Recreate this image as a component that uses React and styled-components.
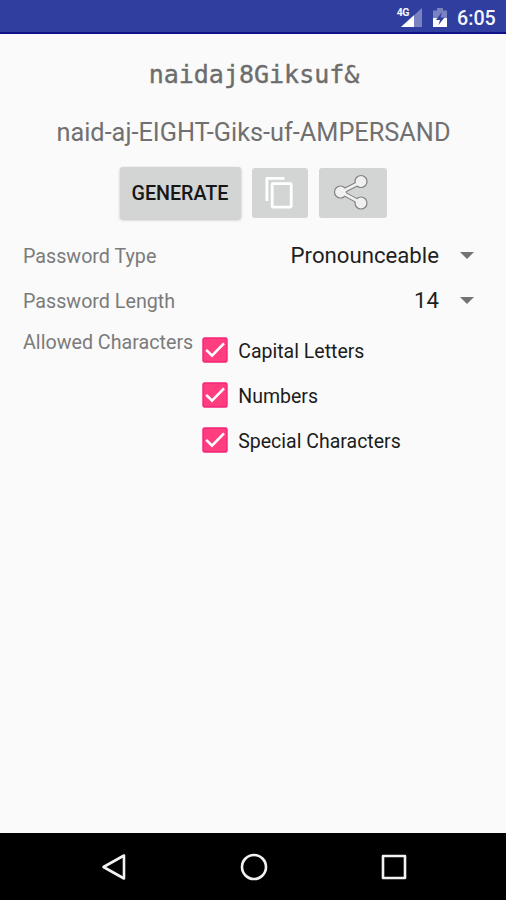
import React, { useState } from 'react';
import styled, { createGlobalStyle } from 'styled-components';

const GlobalStyle = createGlobalStyle`
    body {
        margin: 0;
        background: #fafafa;
        font-family: Roboto, "Liberation Sans", sans-serif;
    }
`;

const Screen = styled.div`
    display: flex;
    flex-direction: column;
    width: 506px;
    height: 900px;
    overflow: hidden;
    background: #fafafa;
`;

const StatusBar = styled.div`
    display: flex;
    justify-content: flex-end;
    height: 34px;
    box-sizing: border-box;
    padding-right: 11px;
    background: #303f9f;
    border-bottom: 2px solid #10108a;
    color: #f5f6fb;
`;

const StatusIcons = styled.svg`
    display: block;
    width: 60px;
    height: 32px;
`;

const Network = styled.span`
    align-self: flex-start;
    margin: 6px -12px 0 0;
    font-size: 10.5px;
    line-height: 13px;
    font-weight: 700;
    letter-spacing: -0.5px;
`;

const Clock = styled.span`
    font-size: 19.7px;
    font-weight: 500;
    line-height: 37px;
    width: 38px;
    white-space: nowrap;
`;

const Content = styled.main`
    flex: 1;
    padding: 0 23px;
`;

const Password = styled.div`
    height: 30px;
    margin-top: 26px;
    padding-left: 2px;
    text-align: center;
    font-family: "DejaVu Sans Mono", monospace;
    font-size: 25px;
    line-height: 30px;
    color: #6d6d6d;
    -webkit-text-stroke: 0.4px #6d6d6d;
`;

const Spelling = styled.div`
    margin-top: 28px;
    padding-left: 1px;
    text-align: center;
    white-space: nowrap;
    font-size: 25.3px;
    line-height: 30px;
    color: #707070;
`;

const Actions = styled.div`
    display: flex;
    align-items: center;
    justify-content: center;
    gap: 11px;
    height: 52px;
    margin-top: 19px;
`;

const ActionButton = styled.button`
    display: flex;
    align-items: center;
    justify-content: center;
    width: ${props => props.$width}px;
    height: ${props => props.$raised ? 52 : 50}px;
    padding: 0;
    border: 0;
    border-radius: 3px;
    background: #d3d4d4;
    box-shadow: ${props => props.$raised ? '0 1px 3px rgba(0, 0, 0, 0.25)' : 'none'};
    font-family: inherit;
    font-size: 19.7px;
    font-weight: 500;
    color: #161616;
`;

const Row = styled.div`
    display: flex;
    align-items: center;
    justify-content: space-between;
    height: 45px;
`;

const Settings = styled.div`
    margin-top: 13px;
`;

const Label = styled.span`
    padding-top: ${props => props.$inset || 0}px;
    font-size: 19.7px;
    line-height: 24px;
    color: #7b7b7b;
    white-space: nowrap;
`;

const Spinner = styled.div`
    display: flex;
    align-items: center;
    gap: 21px;
    padding-right: 9px;
    font-size: 22.2px;
    line-height: 28px;
    color: #1f1f1f;
`;

const Arrow = styled.span`
    margin-top: 2px;
    border: 7px solid transparent;
    border-top-color: #737373;
    border-bottom: 0;
`;

const Allowed = styled.div`
    display: flex;
    align-items: flex-start;
    padding-top: 7px;
`;

const Checks = styled.div`
    display: flex;
    flex-direction: column;
    gap: 19px;
    margin: 8px 0 0 9px;
`;

const CheckRow = styled.div`
    display: flex;
    align-items: center;
    gap: 10px;
    height: 26px;
    font-size: 19.5px;
    line-height: 26px;
    color: #1c1c1c;
`;

const CheckText = styled.span`
    padding-top: 4px;
`;

const Box = styled.svg`
    display: block;
    width: 26px;
    height: 26px;
`;

const NavBar = styled.nav`
    display: flex;
    align-items: center;
    justify-content: center;
    gap: 112px;
    height: 67px;
    padding-left: 1px;
    background: #000;
`;

const NavIcon = styled.svg`
    width: 28px;
    height: 28px;
    fill: none;
    stroke: #f2f2f2;
    stroke-width: 2.6;
    stroke-linejoin: round;
`;

const CopyIcon = () => (
    <svg width="32" height="36" viewBox="2.5 1 32 36" fill="none" stroke="#fff" strokeWidth="2.8" strokeLinejoin="round">
        <path d="M23 4.4H5.4V27" />
        <rect x="10.7" y="9.7" width="19" height="23.5" rx="1" />
    </svg>
)

const ShareIcon = () => (
    <svg width="40" height="40" viewBox="1 0.5 40 40">
        <path d="M29 9.5L9 19.5L29 30.5" fill="none" stroke="#828282" strokeWidth="4.8" />
        <g fill="#f0f0f0" stroke="#828282" strokeWidth="1.2">
            <circle cx="8.5" cy="19.5" r="6" />
            <circle cx="29" cy="9" r="6" />
            <circle cx="29" cy="30.5" r="6" />
        </g>
        <path d="M29 9.5L9 19.5L29 30.5" fill="none" stroke="#f0f0f0" strokeWidth="2.6" />
    </svg>
)

const Check = (props) => {
    const [checked, setChecked] = useState(true);

    return (
        <CheckRow onClick={() => setChecked(!checked)}>
            <Box viewBox="0 0 26 26">
                <rect x="1" y="1" width="24" height="24" rx="1.5" fill={checked ? '#ff3d7f' : '#fafafa'} stroke="#f5247a" strokeWidth="1.4" />
                {checked && <path d="M4.2 12.8L10 18.6L22 6.4" fill="none" stroke="#fff" strokeWidth="2.6" />}
            </Box>
            <CheckText>{props.label}</CheckText>
        </CheckRow>
    )
}

const Setting = (props) => (
    <Row>
        <Label $inset={5}>{props.label}</Label>
        <Spinner>{props.value}<Arrow /></Spinner>
    </Row>
)

const App = () => {
    return (
        <Screen>
            <GlobalStyle />
            <StatusBar>
                <Network>4G</Network>
                <StatusIcons viewBox="397 0 60 32">
                    <path d="M422 8V27H401Z" fill="#7983c1" />
                    <path d="M414 15.2V27H401Z" fill="#fff" />
                    <path d="M433 10.5H437V8H443V10.5H447V27H433Z" fill="#7983c1" />
                    <path d="M433 18H447V27H433Z" fill="#fff" />
                    <path d="M442 12L436 20H440L438.5 25L444.5 17.5H440.5Z" fill="#303f9f" />
                </StatusIcons>
                <Clock>6:05</Clock>
            </StatusBar>
            <Content>
                <Password>naidaj8Giksuf&amp;</Password>
                <Spelling>naid-aj-EIGHT-Giks-uf-AMPERSAND</Spelling>
                <Actions>
                    <ActionButton $width={121} $raised>GENERATE</ActionButton>
                    <ActionButton $width={56}><CopyIcon /></ActionButton>
                    <ActionButton $width={68}><ShareIcon /></ActionButton>
                </Actions>
                <Settings>
                    <Setting label="Password Type" value="Pronounceable" />
                    <Setting label="Password Length" value="14" />
                    <Allowed>
                        <Label $inset={2}>Allowed Characters</Label>
                        <Checks>
                            <Check label="Capital Letters" />
                            <Check label="Numbers" />
                            <Check label="Special Characters" />
                        </Checks>
                    </Allowed>
                </Settings>
            </Content>
            <NavBar>
                <NavIcon viewBox="0 0 28 28"><path d="M24 2.5V25.5L3.5 14Z" /></NavIcon>
                <NavIcon viewBox="0 0 28 28"><circle cx="14" cy="14" r="12" /></NavIcon>
                <NavIcon viewBox="0 0 28 28"><rect x="3" y="3" width="22" height="22" /></NavIcon>
            </NavBar>
        </Screen>
    )
}

export default App;
